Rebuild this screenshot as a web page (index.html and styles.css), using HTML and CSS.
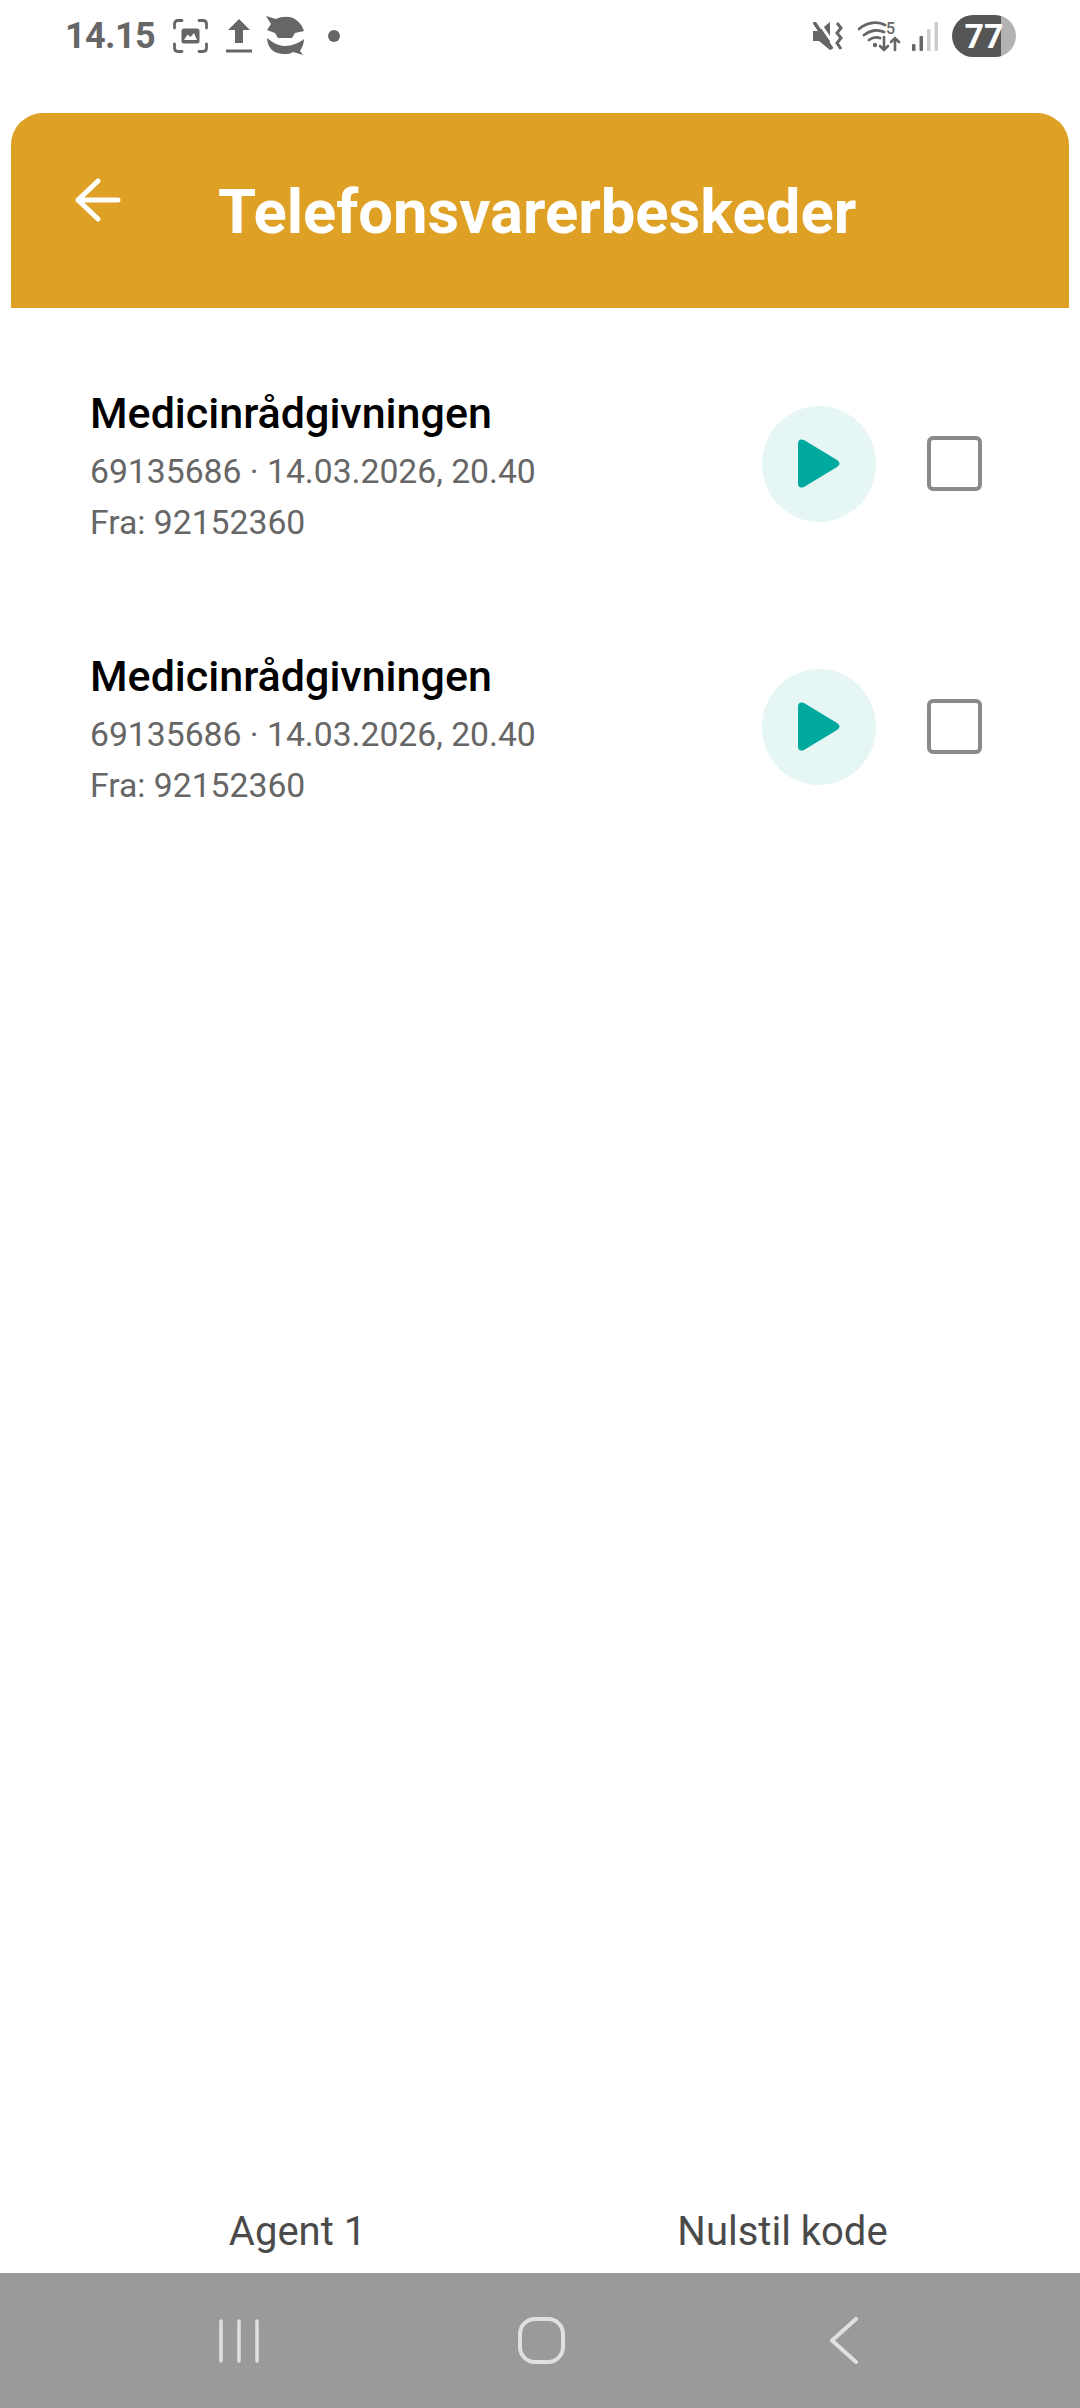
FILE: index.html
```html
<!DOCTYPE html>
<html lang="da">
<head>
    <meta charset="utf-8">
    <title>Telefonsvarerbeskeder</title>
    <link rel="stylesheet" href="styles.css">
</head>
<body>
<div class="page">
    <div class="statusbar">
        <div class="status-left">
            <span class="time">14.15</span>
            <svg class="ic-shot" viewBox="0 0 35 34" fill="none" stroke="#666" stroke-width="2.8" stroke-linecap="round">
                <path d="M1.5 9V5Q1.5 1.5 5 1.5H9M26 1.5H30Q33.500 1.500 33.500 5V9M1.500 25V29Q1.500 32.500 5 32.500H9M26 32.500H30Q33.500 32.500 33.500 29V25"/>
                <path fill="#666" stroke="none" d="M11 9.500H24Q26.500 9.500 26.500 12V22Q26.500 24.500 24 24.500H11Q8.500 24.500 8.500 22V12Q8.500 9.500 11 9.500Z"/>
                <path fill="#fff" stroke="none" d="M11 21L14.500 15.500L17.500 18L21 14L24 21Z"/>
            </svg>
            <svg class="ic-upload" viewBox="0 0 26 34" fill="#666">
                <path d="M13 0L24 11H17V24H9V11H2Z"/>
                <rect x="0" y="30.500" width="26" height="3"/>
            </svg>
            <svg class="ic-fish" viewBox="0 0 39 40" fill="#666">
                <path d="M0 0L10 3C16 0 24 0 29 3C33 6 36 9 38 15L29 17L26 22H12L9 17L1 14L5 8Z"/>
                <path d="M1 22C8 28 14 30 19 30C26 30 33 27 38 23C38 28 36 32 34 35L37 39L27 36C24 38 22 38 19 38C12 38 6 36 3 30C2 28 1 25 1 22Z"/>
            </svg>
            <span class="dot"></span>
        </div>
        <div class="status-right">
            <svg class="ic-mute" viewBox="0 0 30 28" fill="#666">
                <path d="M0 9H6L17 0V28L6 19H0Z"/>
                <path d="M5 -1L22 24" stroke="#fff" stroke-width="3"/>
                <path d="M1 0L19 27" stroke="#666" stroke-width="3.500"/>
                <path d="M24 1L28 6L24 11L28 16L24 21L28 27" fill="none" stroke="#666" stroke-width="3"/>
            </svg>
            <svg class="ic-wifi" viewBox="0 0 44 32" fill="none" stroke="#666" stroke-width="2.800" stroke-linecap="round">
                <path d="M1 9C9 2 20 1 27 5M6 15C12 10 20 9 26 12M11 20C15 17 19 17 22 18"/>
                <circle cx="17" cy="25" r="2.200" fill="#666" stroke="none"/>
                <text x="28" y="13.500" class="wifi-five">5</text>
                <path d="M26 17V30M22 26L26 30L30 26M37 30V18M33 22L37 18L41 22" stroke-width="2.600"/>
            </svg>
            <svg class="ic-signal" viewBox="0 0 26 29">
                <rect x="0" y="22" width="3.500" height="7" rx="1" fill="#666"/>
                <rect x="7.500" y="14" width="3.500" height="15" rx="1" fill="#666"/>
                <rect x="15" y="7" width="3.500" height="22" rx="1" fill="#ccc"/>
                <rect x="22.500" y="0" width="3.500" height="29" rx="1" fill="#ccc"/>
            </svg>
            <span class="battery">77</span>
        </div>
    </div>

    <div class="header">
        <svg class="ic-back" viewBox="0 0 46 44" fill="none" stroke="#fff" stroke-width="5" stroke-linecap="round" stroke-linejoin="round">
            <path d="M23 3L3 22L23 41M3 22H43"/>
        </svg>
        <h1 class="title">Telefonsvarerbeskeder</h1>
    </div>

    <div class="list">
        <div class="item">
            <div class="item-text">
                <div class="item-name">Medicinrådgivningen</div>
                <div class="item-sub">69135686 · 14.03.2026, 20.40</div>
                <div class="item-sub">Fra: 92152360</div>
            </div>
            <div class="playbtn">
                <svg viewBox="0 0 42 49"><path d="M0 5Q0 -1 6 1L39 21Q44 24.500 39 28L6 48Q0 50 0 44Z" fill="#00a99d"/></svg>
            </div>
            <div class="checkbox"></div>
        </div>
        <div class="item">
            <div class="item-text">
                <div class="item-name">Medicinrådgivningen</div>
                <div class="item-sub">69135686 · 14.03.2026, 20.40</div>
                <div class="item-sub">Fra: 92152360</div>
            </div>
            <div class="playbtn">
                <svg viewBox="0 0 42 49"><path d="M0 5Q0 -1 6 1L39 21Q44 24.500 39 28L6 48Q0 50 0 44Z" fill="#00a99d"/></svg>
            </div>
            <div class="checkbox"></div>
        </div>
    </div>

    <div class="footer">
        <span class="footer-link">Agent 1</span>
        <span class="footer-link">Nulstil kode</span>
    </div>

    <div class="navbar">
        <svg class="nav-recent" viewBox="0 0 42 44" stroke="#e0e0e0" stroke-width="3.500" stroke-linecap="round">
            <path d="M3 2V42M21 2V42M39 2V42"/>
        </svg>
        <svg class="nav-home" viewBox="0 0 47 47" fill="none" stroke="#e0e0e0" stroke-width="4">
            <rect x="2" y="2" width="43" height="43" rx="15"/>
        </svg>
        <svg class="nav-back" viewBox="0 0 28 47" fill="none" stroke="#e0e0e0" stroke-width="4" stroke-linecap="round" stroke-linejoin="round">
            <path d="M26 2L2 23.500L26 45"/>
        </svg>
    </div>
</div>
</body>
</html>
```

FILE: styles.css
```css
* {
    margin: 0;
    padding: 0;
    box-sizing: border-box;
}

body {
    background: #fff;
    font-family: Roboto, sans-serif;
}

.page {
    display: flex;
    flex-direction: column;
    width: 1080px;
    height: 2408px;
}

.statusbar {
    display: flex;
    justify-content: space-between;
    align-items: center;
    height: 113px;
    padding: 0 64px 41px 65px;
    flex-shrink: 0;
}

.status-left,
.status-right {
    display: flex;
    align-items: center;
}

.time {
    width: 89px;
    color: #666;
    font-size: 36px;
    font-weight: 700;
    letter-spacing: -0.6px;
    line-height: 72px;
    margin-right: 19px;
}

.ic-shot {
    width: 35px;
    height: 34px;
    margin-right: 18px;
}

.ic-upload {
    width: 26px;
    height: 34px;
    margin-right: 14px;
}

.ic-fish {
    width: 39px;
    height: 40px;
    margin-right: 23px;
}

.dot {
    width: 12px;
    height: 12px;
    border-radius: 50%;
    background: #666;
}

.ic-mute {
    width: 30px;
    height: 28px;
    margin-right: 15px;
}

.ic-wifi {
    width: 44px;
    height: 32px;
    margin-right: 10px;
}

.wifi-five {
    fill: #666;
    stroke: none;
    font-family: Roboto, sans-serif;
    font-size: 16px;
    font-weight: 500;
}

.ic-signal {
    width: 26px;
    height: 29px;
    margin-right: 14px;
}

.battery {
    width: 64px;
    height: 42px;
    border-radius: 21px;
    background: linear-gradient(to right, #555 77%, #b3b3b3 77%);
    color: #fff;
    font-size: 34px;
    font-weight: 700;
    line-height: 42px;
    text-align: center;
}

.header {
    display: flex;
    align-items: center;
    height: 195px;
    margin: 0 11px;
    padding: 3px 0 0 64px;
    background: #dfa125;
    border-radius: 32px 32px 0 0;
    flex-shrink: 0;
}

.ic-back {
    width: 46px;
    height: 44px;
    margin-right: 97px;
    margin-bottom: 24px;
}

.title {
    color: #fff;
    font-size: 61.6px;
    font-weight: 700;
    line-height: 70px;
}

.list {
    flex: 1;
    padding-top: 67px;
}

.item {
    display: flex;
    align-items: center;
    height: 183px;
    margin-bottom: 80px;
    padding: 0 98px 0 90px;
}

.item-text {
    flex: 1;
}

.item-name {
    color: #000;
    font-size: 43px;
    font-weight: 500;
    line-height: 55px;
    margin-bottom: 5px;
}

.item-sub {
    color: #666;
    font-size: 33.7px;
    line-height: 51px;
}

.playbtn {
    display: flex;
    align-items: center;
    justify-content: center;
    width: 114px;
    height: 116px;
    border-radius: 50%;
    background: #e5f6f5;
    margin: 0 51px 6px 0;
}

.playbtn svg {
    width: 42px;
    height: 49px;
}

.checkbox {
    width: 55px;
    height: 55px;
    border: 4px solid #8a8a8a;
    border-radius: 6px;
    margin-bottom: 6px;
}

.footer {
    display: grid;
    grid-template-columns: 485px 485px;
    justify-items: center;
    padding: 6px 0 0 55px;
    height: 70px;
    flex-shrink: 0;
}

.footer-link {
    color: #4a4a4a;
    font-size: 40px;
    line-height: 46px;
}

.navbar {
    display: flex;
    align-items: center;
    height: 135px;
    padding-left: 218px;
    background: #9a9a9a;
    flex-shrink: 0;
}

.nav-recent {
    width: 42px;
    height: 44px;
    margin-right: 258px;
}

.nav-home {
    width: 47px;
    height: 47px;
    margin-right: 265px;
}

.nav-back {
    width: 28px;
    height: 47px;
}
```
